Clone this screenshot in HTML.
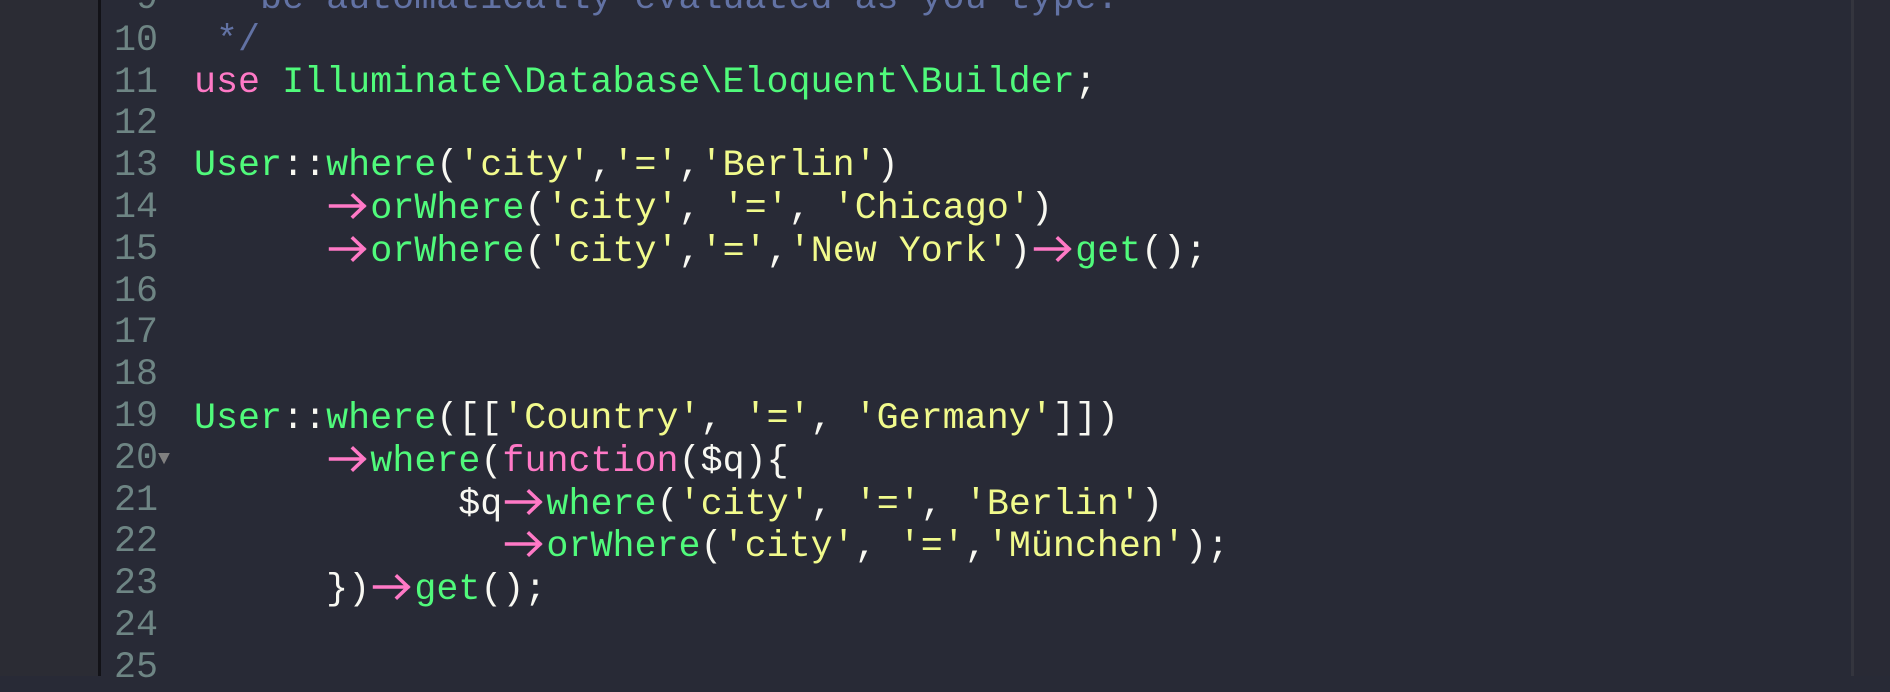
<!DOCTYPE html>
<html><head><meta charset="utf-8"><style>
html,body{margin:0;padding:0}
body{width:1890px;height:676px;overflow:hidden;background:#282a36;position:relative;font-family:"DejaVu Sans Mono","Liberation Mono",monospace}
.side{position:absolute;left:0;top:0;width:98px;height:676px;background:#2b2c34;border-right:3px solid #121217}
.sb{position:absolute;left:1851px;top:0;width:3px;height:676px;background:#34353e}
.sbr{position:absolute;left:1854px;top:0;width:36px;height:676px;background:#292a35}
pre{margin:0;position:absolute;font-size:36.7px;line-height:41.8px;top:-21px}
.ln{left:114px;color:#6e8584}
.code{left:194px;color:#f8f8f2}
.g{color:#50fa7b}.p{color:#ff79c6}.y{color:#f1fa8c}.c{color:#6272a4}
svg.a{width:44.2px;height:34px;vertical-align:-4px}
.f{color:#808080;font-size:20px;vertical-align:4px}
</style></head><body>
<svg width="0" height="0" style="position:absolute"><defs><symbol id="ar" viewBox="0 0 44 34"><path d="M4.5 18H37.5M27 7.5L38 18L27 28.5" fill="none" stroke="#ff79c6" stroke-width="3.6" stroke-linecap="square"/></symbol></defs></svg>
<div class="side"></div><div class="sb"></div><div class="sbr"></div>
<pre class="ln"> 9
10
11
12
13
14
15
16
17
18
19
20<span class="f">▼</span>
21
22
23
24
25</pre>
<pre class="code"><span class="c"> * be automatically evaluated as you type.</span>
<span class="c"> */</span>
<span class="p">use</span> <span class="g">Illuminate\Database\Eloquent\Builder</span>;

<span class="g">User</span>::<span class="g">where</span>(<span class="y">'city'</span>,<span class="y">'='</span>,<span class="y">'Berlin'</span>)
      <svg class="a"><use href="#ar"/></svg><span class="g">orWhere</span>(<span class="y">'city'</span>, <span class="y">'='</span>, <span class="y">'Chicago'</span>)
      <svg class="a"><use href="#ar"/></svg><span class="g">orWhere</span>(<span class="y">'city'</span>,<span class="y">'='</span>,<span class="y">'New York'</span>)<svg class="a"><use href="#ar"/></svg><span class="g">get</span>();



<span class="g">User</span>::<span class="g">where</span>([[<span class="y">'Country'</span>, <span class="y">'='</span>, <span class="y">'Germany'</span>]])
      <svg class="a"><use href="#ar"/></svg><span class="g">where</span>(<span class="p">function</span>($q){
            $q<svg class="a"><use href="#ar"/></svg><span class="g">where</span>(<span class="y">'city'</span>, <span class="y">'='</span>, <span class="y">'Berlin'</span>)
              <svg class="a"><use href="#ar"/></svg><span class="g">orWhere</span>(<span class="y">'city'</span>, <span class="y">'='</span>,<span class="y">'München'</span>);
      })<svg class="a"><use href="#ar"/></svg><span class="g">get</span>();

</pre>
</body></html>
